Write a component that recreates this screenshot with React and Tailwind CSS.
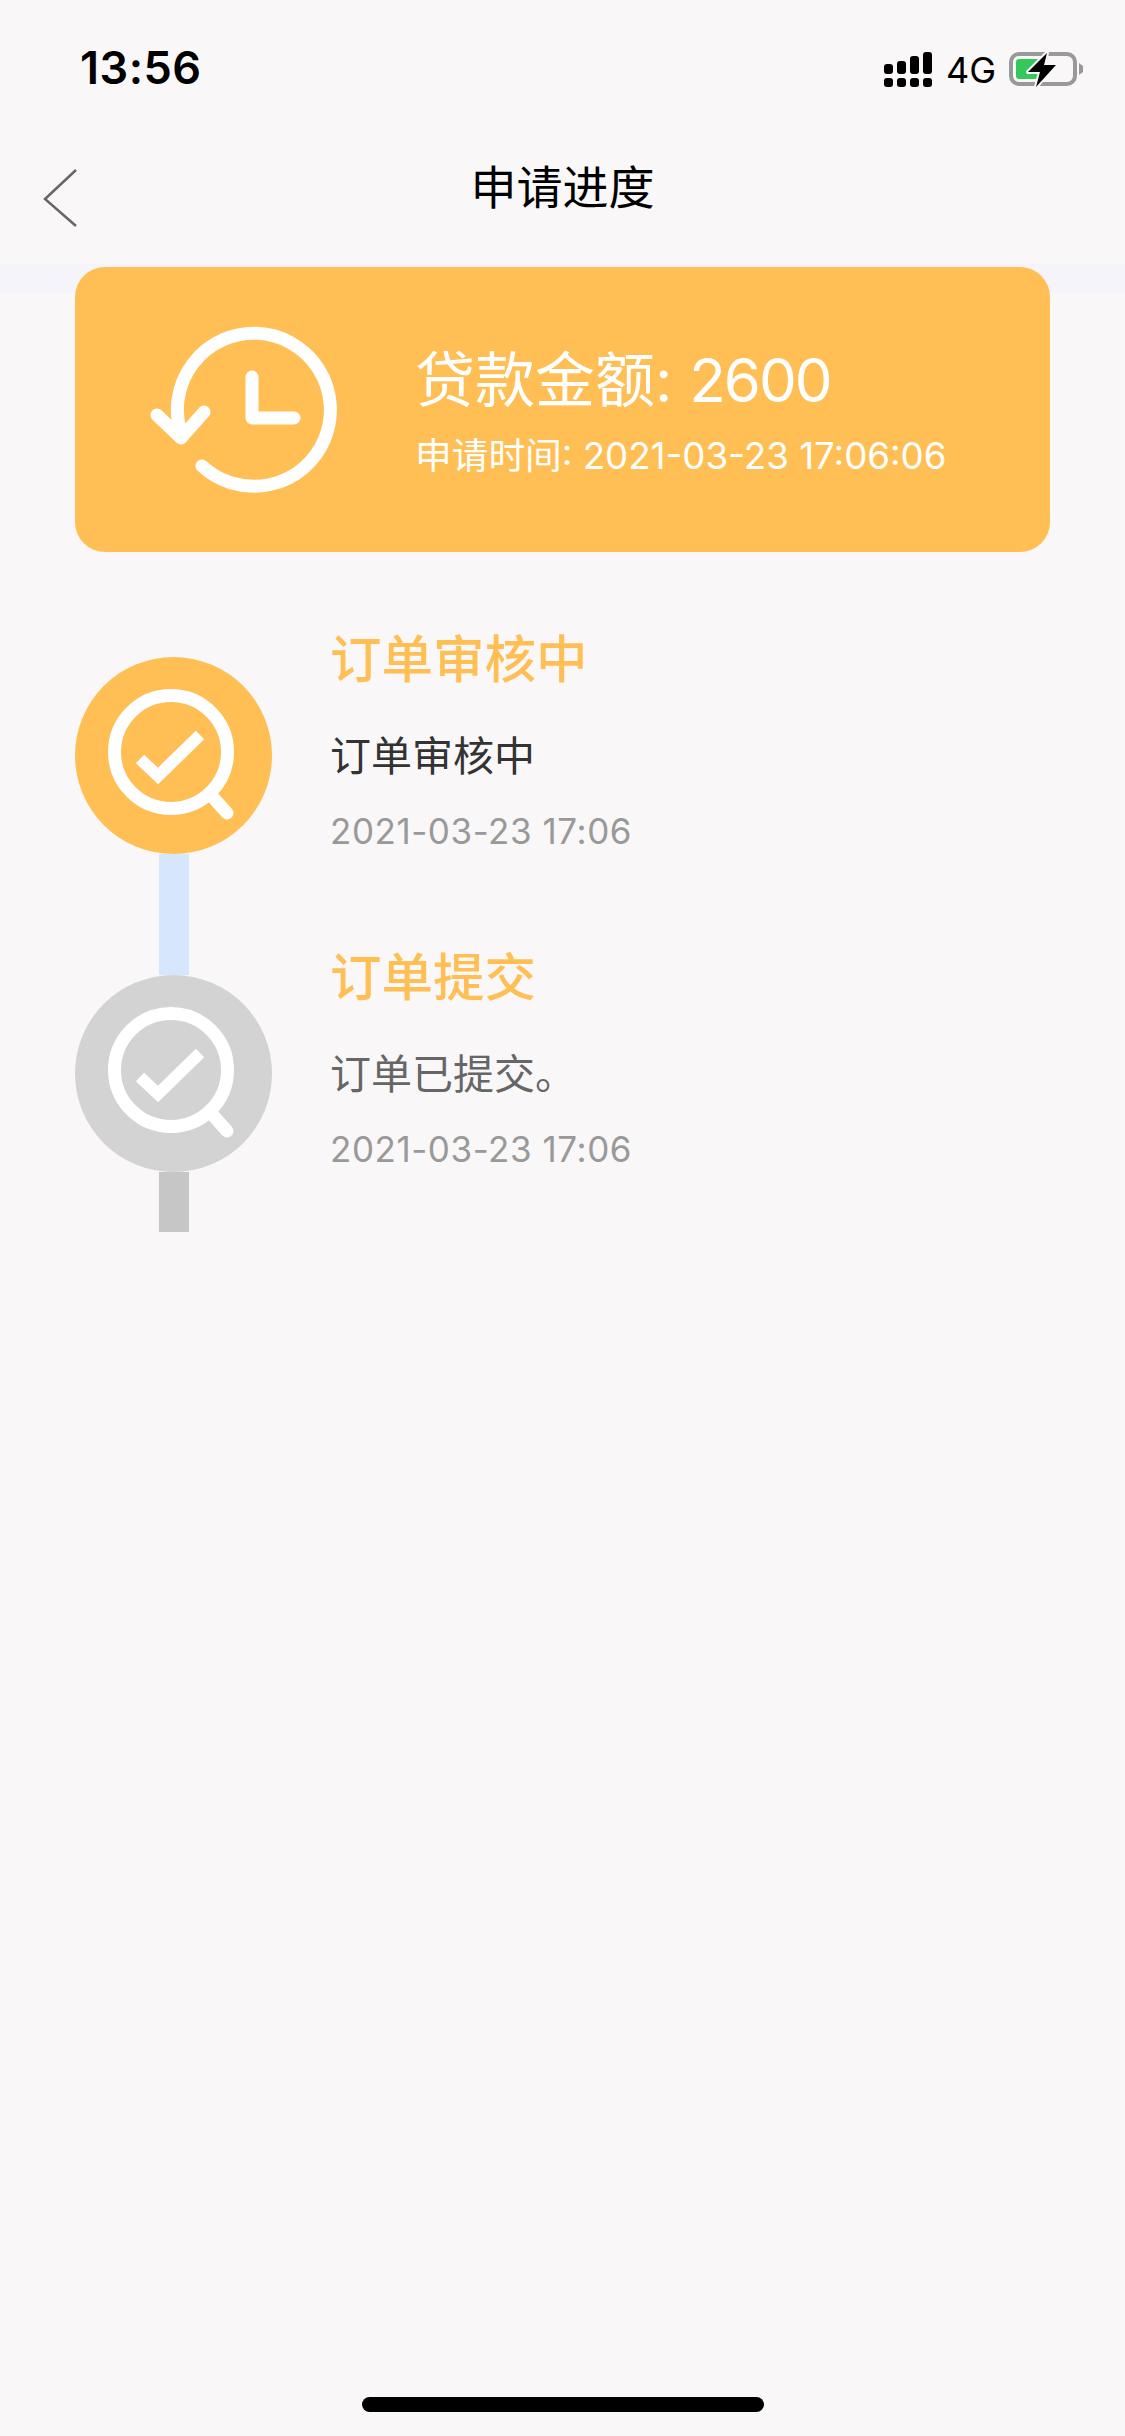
const FONT = "font-['Inter','Noto_Sans_CJK_SC',sans-serif]";

function StatusBar() {
  return (
    <div className="flex h-[132px] items-start justify-between">
      <span className="ml-[80px] mt-[41px] text-[45px] leading-[54px] font-semibold tracking-[0.5px] text-black">13:56</span>
      <svg className="mr-[40px] mt-[44px]" width="205" height="50" viewBox="880 44 205 50">
        <g fill="#000">
          <rect x="884" y="64" width="9" height="10" rx="3" />
          <rect x="897" y="61" width="9" height="13" rx="3" />
          <rect x="910" y="56" width="9" height="18" rx="3" />
          <rect x="923" y="52" width="9" height="22" rx="3" />
          <rect x="884" y="78" width="9" height="9" rx="3" />
          <rect x="897" y="78" width="9" height="9" rx="3" />
          <rect x="910" y="78" width="9" height="9" rx="3" />
          <rect x="923" y="78" width="9" height="9" rx="3" />
        </g>
        <text x="946" y="83" fontSize="36" fontFamily="Inter, sans-serif" fontWeight="400" fill="#000">4G</text>
        <rect x="1011" y="54" width="64" height="30" rx="8" fill="none" stroke="#999" strokeWidth="4" />
        <path d="M1079 63 L1083 66 V72 L1079 75 Z" fill="#999" />
        <rect x="1016" y="59" width="30" height="20" rx="3" fill="#34c759" />
        <path d="M1047 53 L1028 72 H1040 L1036 87 L1056 65 H1044 Z" fill="#000" stroke="#f9f7f8" strokeWidth="4" paintOrder="stroke" strokeLinejoin="round" />
      </svg>
    </div>
  );
}

function NavBar() {
  return (
    <div className="relative flex h-[132px] items-center justify-center pb-[22px]">
      <svg className="absolute left-[42px] top-[36px]" width="36" height="60" viewBox="0 0 36 60" fill="none">
        <path d="M34 2 L3 31 L34 58" stroke="#666" strokeWidth="2.5" />
      </svg>
      <span className="text-[46px] leading-[56px] text-black">申请进度</span>
    </div>
  );
}

function ClockIcon() {
  return (
    <svg width="200" height="180" viewBox="145 320 200 180" fill="none" stroke="#fff" strokeWidth="13" strokeLinecap="round" strokeLinejoin="round">
      <path d="M179 430 A76.5 76.5 0 1 1 200 463" />
      <path d="M155 412 L179 435 L202 409" />
      <path d="M250 374 V415 H292" />
    </svg>
  );
}

function SearchCheck() {
  return (
    <svg className="block" width="197" height="197" viewBox="0 0 197 197" fill="none" stroke="#fff">
      <circle cx="96" cy="95" r="56.5" strokeWidth="13" />
      <path d="M135 137 L152 156" strokeWidth="13" strokeLinecap="round" />
      <path d="M65 102 L83 119 L125 78" strokeWidth="12" />
    </svg>
  );
}

function Step({ circle, line, title, desc, descColor, height }) {
  return (
    <div className={`flex ${height}`}>
      <div className="flex w-[197px] shrink-0 flex-col items-center">
        <div className={`h-[197px] w-[197px] shrink-0 rounded-full ${circle}`}>
          <SearchCheck />
        </div>
        <div className={`w-[30px] ${line}`} />
      </div>
      <div className="ml-[58px] -mt-[30px] flex flex-col">
        <div className="h-[64px] text-[51.5px] leading-[64px] font-medium text-[#ffbf55]">{title}</div>
        <div className={`mt-[33px] h-[64px] text-[41px] leading-[64px] ${descColor}`}>{desc}</div>
        <div className="mt-[11px] h-[64px] text-[35px] leading-[64px] tracking-[0.55px] text-[#999]">2021-03-23 17:06</div>
      </div>
    </div>
  );
}

export default function App() {
  return (
    <div className={`flex h-[2436px] w-[1125px] flex-col overflow-hidden bg-[#f9f7f8] ${FONT}`}>
      <StatusBar />
      <NavBar />
      <div className="h-[29px] bg-[#f4f4fa]" />
      <div className="mx-[75px] -mt-[26px] flex h-[285px] shrink-0 items-center rounded-[30px] bg-[#ffbf55] text-white">
        <div className="ml-[72px] mt-[7px]">
          <ClockIcon />
        </div>
        <div className="ml-[68px] mt-[6px] flex flex-col">
          <span className="-mt-[4px] text-[60px] leading-[76px]">贷款金额: <span className="tracking-[-2px]">2600</span></span>
          <span className="mt-[14px] text-[36.7px] leading-[48px]">申请时间: 2021-03-23 17:06:06</span>
        </div>
      </div>
      <div className="mx-[75px] mt-[105px] flex flex-col">
        <Step height="h-[318px]" circle="bg-[#ffbf55]" line="h-[121px] bg-[#d6e7fd]" title="订单审核中" desc="订单审核中" descColor="text-[#333]" />
        <Step height="h-[258px]" circle="bg-[#d3d3d3]" line="h-[60px] bg-[#c6c6c6]" title="订单提交" desc="订单已提交。" descColor="text-[#666]" />
      </div>
      <div className="mt-auto mb-[24px] h-[15px] w-[402px] self-center rounded-full bg-black" />
    </div>
  );
}
